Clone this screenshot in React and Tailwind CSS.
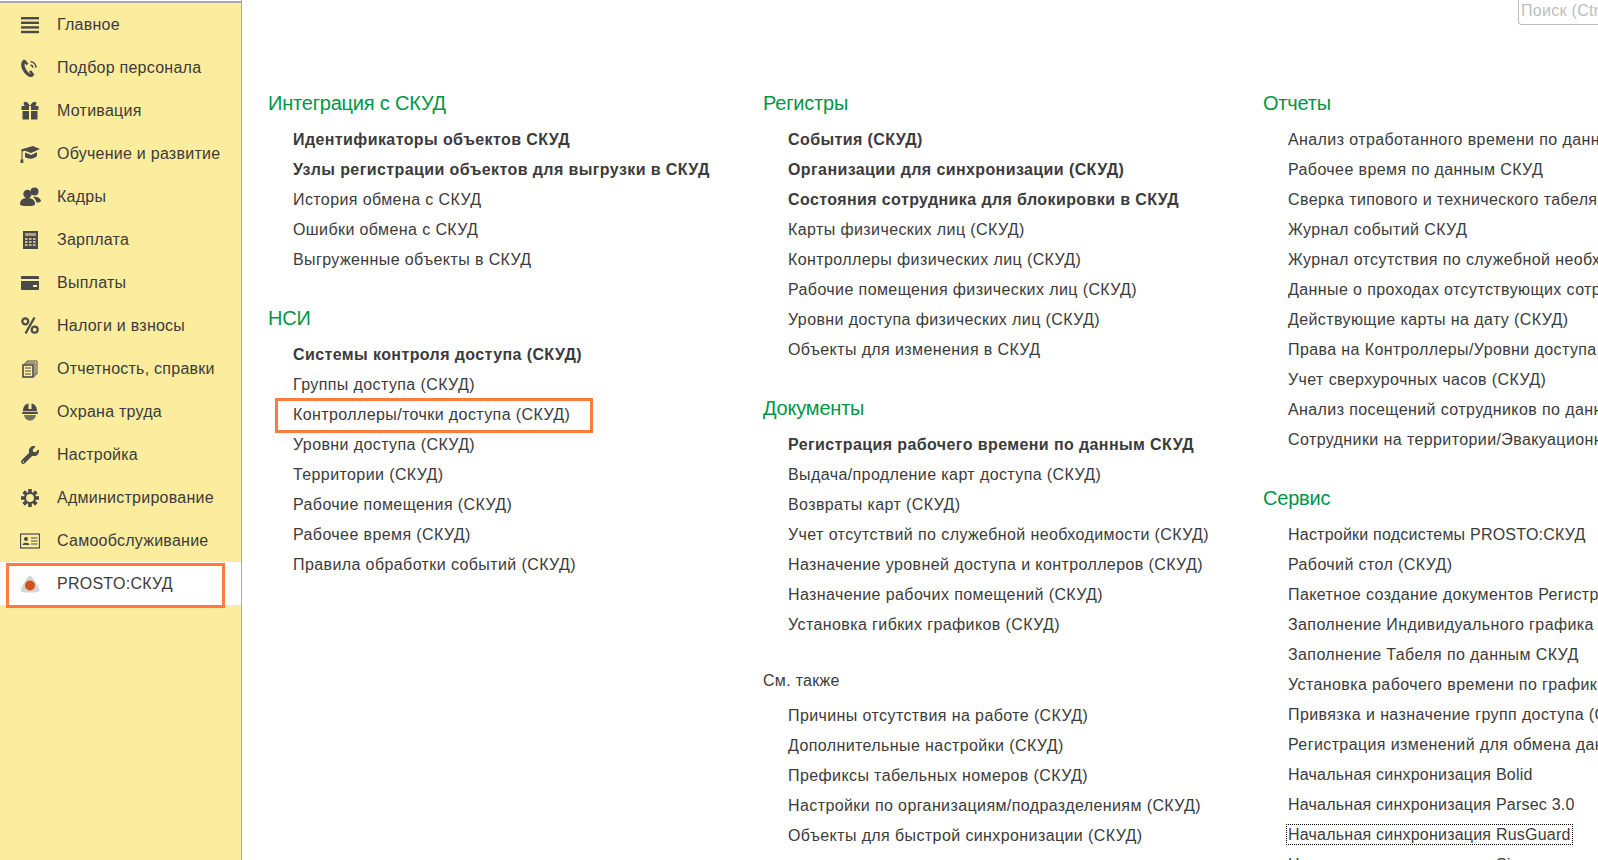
import { FaWrench } from "react-icons/fa";

const ink = "#4a4a4a";

// Sidebar icons, drawn to follow the 1C section pictograms
function MenuIcon() {
  return (
    <svg width="18" height="18" viewBox="0 0 18 18" fill={ink}>
      <rect x="0" y="1" width="18" height="2.4" />
      <rect x="0" y="5.6" width="18" height="2.4" />
      <rect x="0" y="10.2" width="18" height="2.4" />
      <rect x="0" y="14.8" width="18" height="2.4" />
    </svg>
  );
}

function PhoneIcon() {
  return (
    <svg width="18" height="18" viewBox="0 0 18 18" fill="none" stroke={ink}>
      <path d="M4 1.5C1 4 1.5 7.5 3.5 11s5 6 8 5.5" strokeWidth="3.4" />
      <path d="M3 1.5 6.5 5.5M9 12l3.5 4.5" strokeWidth="2.6" />
      <path d="M9.5 2.5c3 .4 5.5 3 5.6 6.2" strokeWidth="1.5" />
      <path d="M9.5 6c1.5.3 2.4 1.3 2.6 2.6" strokeWidth="1.5" />
    </svg>
  );
}

function GiftIcon() {
  return (
    <svg width="18" height="19" viewBox="0 0 18 19" fill={ink}>
      <path d="M9 5C7 1 5 .5 3.5 1 2 1.6 2.5 4 4 5zM9 5c2-4 4-4.5 5.5-4C16 1.6 15.5 4 14 5z" />
      <rect x="0.5" y="5" width="7.5" height="4" />
      <rect x="10" y="5" width="7.5" height="4" />
      <rect x="1.5" y="10" width="6.5" height="8.5" />
      <rect x="10" y="10" width="6.5" height="8.5" />
    </svg>
  );
}

function HatIcon() {
  return (
    <svg width="20" height="18" viewBox="0 0 20 18" fill={ink}>
      <path d="M1 4.5 13 1l7 3-9 4-6-2.200-2.500.8V15H1.500V5.400z" />
      <path d="M5 7.500 11 10l6-2.700V11c-2 2-4 2.700-6.500 2.700-2 0-4-.8-5.500-1.700z" />
      <rect x="0.5" y="14.5" width="2.8" height="3.5" />
    </svg>
  );
}

function PeopleIcon() {
  return (
    <svg width="21" height="19" viewBox="0 0 21 19" fill={ink}>
      <circle cx="14.5" cy="4.5" r="4" />
      <path d="M13 10c3-1 7 .5 8 3.500 0 1.500-1.500 2-4.500 2-.5-2.500-1.500-4-3.500-5.500z" />
      <circle cx="7.5" cy="7" r="4.2" />
      <path d="M0 17c0-4 3-6 7.500-6s7.500 2 7.500 6c0 1.500-2 2-7.500 2S0 18.500 0 17z" />
    </svg>
  );
}

function CalcIcon() {
  return (
    <svg width="15" height="18" viewBox="0 0 15 18">
      <rect width="15" height="18" fill={ink} />
      <rect x="2" y="2" width="11" height="3" fill="#fbec9e" opacity="0.55" />
      {[7, 10, 13].map((y) =>
        [2, 6, 10].map((x) => (
          <rect key={`${x}-${y}`} x={x} y={y} width="2.6" height="2" fill="#fbec9e" opacity="0.7" />
        ))
      )}
    </svg>
  );
}

function WalletIcon() {
  return (
    <svg width="18" height="14" viewBox="0 0 18 14" fill={ink}>
      <path d="M1 0h16a1 1 0 0 1 1 1v2H0V1a1 1 0 0 1 1-1z" />
      <path d="M0 5h18v8a1 1 0 0 1-1 1H1a1 1 0 0 1-1-1zM12 9v2h4V9z" fillRule="evenodd" />
    </svg>
  );
}

function PercentIcon() {
  return (
    <svg width="18" height="17" viewBox="0 0 18 17" fill="none" stroke={ink} strokeWidth="2.2">
      <circle cx="4.3" cy="4.3" r="3" />
      <circle cx="13.7" cy="12.7" r="3" />
      <path d="M13.5 0.5 4.5 16.5" />
    </svg>
  );
}

function ReportsIcon() {
  return (
    <svg width="16" height="18" viewBox="0 0 16 18" fill="none" stroke={ink}>
      <path d="M5 2.5V1h10v13h-1.500" />
      <path d="M3 4.5V3h10v13h-1.500" />
      <rect x="1" y="5" width="10" height="12" strokeWidth="1.6" />
      <path d="M3 8h6M3 11h6M3 14h6" />
    </svg>
  );
}

function HardHatIcon() {
  return (
    <svg width="16" height="18" viewBox="0 0 16 18" fill={ink}>
      <path d="M1 8C1 3.500 3.500 1 6.500 .6V6h3V.6C12.500 1 15 3.500 15 8z" />
      <rect x="0" y="8.8" width="16" height="2.2" rx="1" />
      <path d="M2 12h12c-.5 3.500-3 5.500-6 5.500S2.500 15.500 2 12z" opacity="0.75" />
    </svg>
  );
}

function GearIcon() {
  const teeth = [0, 45, 90, 135, 180, 225, 270, 315];
  return (
    <svg width="18" height="18" viewBox="0 0 18 18">
      {teeth.map((a) => (
        <rect key={a} x="7.2" y="0" width="3.6" height="4" fill={ink} transform={`rotate(${a} 9 9)`} />
      ))}
      <circle cx="9" cy="9" r="5" fill="none" stroke={ink} strokeWidth="2.2" />
    </svg>
  );
}

function CardIcon() {
  return (
    <svg width="20" height="16" viewBox="0 0 20 16" fill="none" stroke={ink}>
      <rect x="0.5" y="1" width="19" height="14" strokeWidth="1.2" />
      <circle cx="6" cy="6" r="2" fill={ink} stroke="none" />
      <path d="M2.500 12c0-3 7-3 7 0z" fill={ink} stroke="none" />
      <path d="M11 5h6.500M11 8h6.500M11 11h6.500" />
    </svg>
  );
}

function ProstoIcon() {
  return (
    <svg width="20" height="20" viewBox="0 0 20 20">
      <path d="M10 1.500C12 1.500 19.500 14 19.500 16.500 19.500 18 15 18.500 10 18.500S.5 18 .5 16.500C.5 14 8 1.500 10 1.500z" fill="#d4d4d0" />
      <circle cx="10" cy="11.5" r="5" fill="#d3501f" />
    </svg>
  );
}

const menuItems = [
  { label: "Главное", icon: <MenuIcon /> },
  { label: "Подбор персонала", icon: <PhoneIcon /> },
  { label: "Мотивация", icon: <GiftIcon /> },
  { label: "Обучение и развитие", icon: <HatIcon /> },
  { label: "Кадры", icon: <PeopleIcon /> },
  { label: "Зарплата", icon: <CalcIcon /> },
  { label: "Выплаты", icon: <WalletIcon /> },
  { label: "Налоги и взносы", icon: <PercentIcon /> },
  { label: "Отчетность, справки", icon: <ReportsIcon /> },
  { label: "Охрана труда", icon: <HardHatIcon /> },
  { label: "Настройка", icon: <FaWrench size={18} color={ink} /> },
  { label: "Администрирование", icon: <GearIcon /> },
  { label: "Самообслуживание", icon: <CardIcon /> },
  { label: "PROSTO:СКУД", icon: <ProstoIcon />, active: true },
];

const columns = [
  {
    id: "left",
    width: "w-[495px]",
    sections: [
      {
        title: "Интеграция с СКУД",
        items: [
          { t: "Идентификаторы объектов СКУД", b: true },
          { t: "Узлы регистрации объектов для выгрузки в СКУД", b: true },
          { t: "История обмена с СКУД" },
          { t: "Ошибки обмена с СКУД" },
          { t: "Выгруженные объекты в СКУД" },
        ],
      },
      {
        title: "НСИ",
        items: [
          { t: "Системы контроля доступа (СКУД)", b: true },
          { t: "Группы доступа (СКУД)" },
          { t: "Контроллеры/точки доступа (СКУД)", marked: true },
          { t: "Уровни доступа (СКУД)" },
          { t: "Территории (СКУД)" },
          { t: "Рабочие помещения (СКУД)" },
          { t: "Рабочее время (СКУД)" },
          { t: "Правила обработки событий (СКУД)" },
        ],
      },
    ],
  },
  {
    id: "middle",
    width: "w-[500px]",
    sections: [
      {
        title: "Регистры",
        items: [
          { t: "События (СКУД)", b: true },
          { t: "Организации для синхронизации (СКУД)", b: true },
          { t: "Состояния сотрудника для блокировки в СКУД", b: true },
          { t: "Карты физических лиц (СКУД)" },
          { t: "Контроллеры физических лиц (СКУД)" },
          { t: "Рабочие помещения физических лиц (СКУД)" },
          { t: "Уровни доступа физических лиц (СКУД)" },
          { t: "Объекты для изменения в СКУД" },
        ],
      },
      {
        title: "Документы",
        items: [
          { t: "Регистрация рабочего времени по данным СКУД", b: true },
          { t: "Выдача/продление карт доступа (СКУД)" },
          { t: "Возвраты карт (СКУД)" },
          { t: "Учет отсутствий по служебной необходимости (СКУД)" },
          { t: "Назначение уровней доступа и контроллеров (СКУД)" },
          { t: "Назначение рабочих помещений (СКУД)" },
          { t: "Установка гибких графиков (СКУД)" },
        ],
      },
      {
        title: "См. также",
        small: true,
        items: [
          { t: "Причины отсутствия на работе (СКУД)" },
          { t: "Дополнительные настройки (СКУД)" },
          { t: "Префиксы табельных номеров (СКУД)" },
          { t: "Настройки по организациям/подразделениям (СКУД)" },
          { t: "Объекты для быстрой синхронизации (СКУД)" },
        ],
      },
    ],
  },
  {
    id: "right",
    width: "w-[400px]",
    sections: [
      {
        title: "Отчеты",
        items: [
          { t: "Анализ отработанного времени по данным СКУД" },
          { t: "Рабочее время по данным СКУД" },
          { t: "Сверка типового и технического табеля" },
          { t: "Журнал событий СКУД" },
          { t: "Журнал отсутствия по служебной необходимости" },
          { t: "Данные о проходах отсутствующих сотрудников" },
          { t: "Действующие карты на дату (СКУД)" },
          { t: "Права на Контроллеры/Уровни доступа" },
          { t: "Учет сверхурочных часов (СКУД)" },
          { t: "Анализ посещений сотрудников по данным" },
          { t: "Сотрудники на территории/Эвакуационный лист" },
        ],
      },
      {
        title: "Сервис",
        items: [
          { t: "Настройки подсистемы PROSTO:СКУД", latin: true },
          { t: "Рабочий стол (СКУД)" },
          { t: "Пакетное создание документов Регистрация" },
          { t: "Заполнение Индивидуального графика по данным" },
          { t: "Заполнение Табеля по данным СКУД" },
          { t: "Установка рабочего времени по графикам" },
          { t: "Привязка и назначение групп доступа (СКУД)" },
          { t: "Регистрация изменений для обмена данными" },
          { t: "Начальная синхронизация Bolid", latin: true },
          { t: "Начальная синхронизация Parsec 3.0", latin: true },
          { t: "Начальная синхронизация RusGuard", latin: true, focused: true },
          { t: "Начальная синхронизация Sigur", latin: true },
        ],
      },
    ],
  },
];

function Link({ item }) {
  return (
    <div
      className={`relative h-[30px] leading-[30px] pl-[25px] whitespace-nowrap text-[16px] text-[#3b3b3b] ${
        item.latin ? "tracking-[0.22px]" : "tracking-[0.4px]"
      }`}
    >
      <span
        className={`${item.b ? "font-bold" : ""} ${
          item.focused ? "outline-1 outline-dotted outline-black outline-offset-[1px]" : ""
        }`}
      >
        {item.t}
      </span>
      {item.marked && (
        <div className="absolute left-[7px] top-[-2px] w-[318px] h-[35px] border-[3px] border-[#fd7c3c]" />
      )}
    </div>
  );
}

function Section({ section, first }) {
  if (section.small) {
    return (
      <div className="mt-[26px]">
        <div className="h-[30px] leading-[30px] text-[16px] tracking-[0.3px] text-[#3b3b3b] mb-[5px]">
          {section.title}
        </div>
        {section.items.map((item) => (
          <Link key={item.t} item={item} />
        ))}
      </div>
    );
  }
  return (
    <div className={first ? "" : "mt-[28px]"}>
      <div className="h-[30px] leading-[30px] text-[20px] tracking-[-0.2px] text-[#009646] mb-[7px]">
        {section.title}
      </div>
      {section.items.map((item) => (
        <Link key={item.t} item={item} />
      ))}
    </div>
  );
}

export default function App() {
  return (
    <div className="flex h-screen overflow-hidden bg-white font-['Liberation_Sans',Arial,sans-serif]">
      {/* Sidebar */}
      <aside className="w-[242px] shrink-0 flex flex-col bg-[#fbec9e] border-r border-[#a9a9a9]">
        <div className="h-[3px] shrink-0 bg-white border-b-2 border-[#a9a9a9]" />
        {menuItems.map((m) => (
          <div
            key={m.label}
            className={`relative h-[43px] shrink-0 flex items-center text-[16px] tracking-[0.25px] text-[#3b3b3b] ${m.active ? "bg-white" : ""}`}
          >
            <div className="w-[60px] flex justify-center shrink-0">{m.icon}</div>
            <span className="-ml-[3px]">{m.label}</span>
            {m.active && (
              <div className="absolute left-[6px] top-[1px] w-[219px] h-[45px] border-[3px] border-[#fd7c3c]" />
            )}
          </div>
        ))}
      </aside>

      {/* Main area */}
      <main className="flex-1 min-w-0 overflow-hidden">
        <div className="h-[88px] flex justify-end items-start">
          <div className="w-[80px] h-[25px] border-l border-b border-[#bdbdbd] rounded-bl-[4px] pl-[2px] leading-[21px] text-[16px] tracking-[0.3px] text-[#bdbdbd] overflow-hidden whitespace-nowrap">
            Поиск (Ctrl+F)
          </div>
        </div>
        <div className="flex pl-[26px]">
          {columns.map((col) => (
            <div key={col.id} className={`${col.width} shrink-0`}>
              {col.sections.map((s, i) => (
                <Section key={s.title} section={s} first={i === 0} />
              ))}
            </div>
          ))}
        </div>
      </main>
    </div>
  );
}
